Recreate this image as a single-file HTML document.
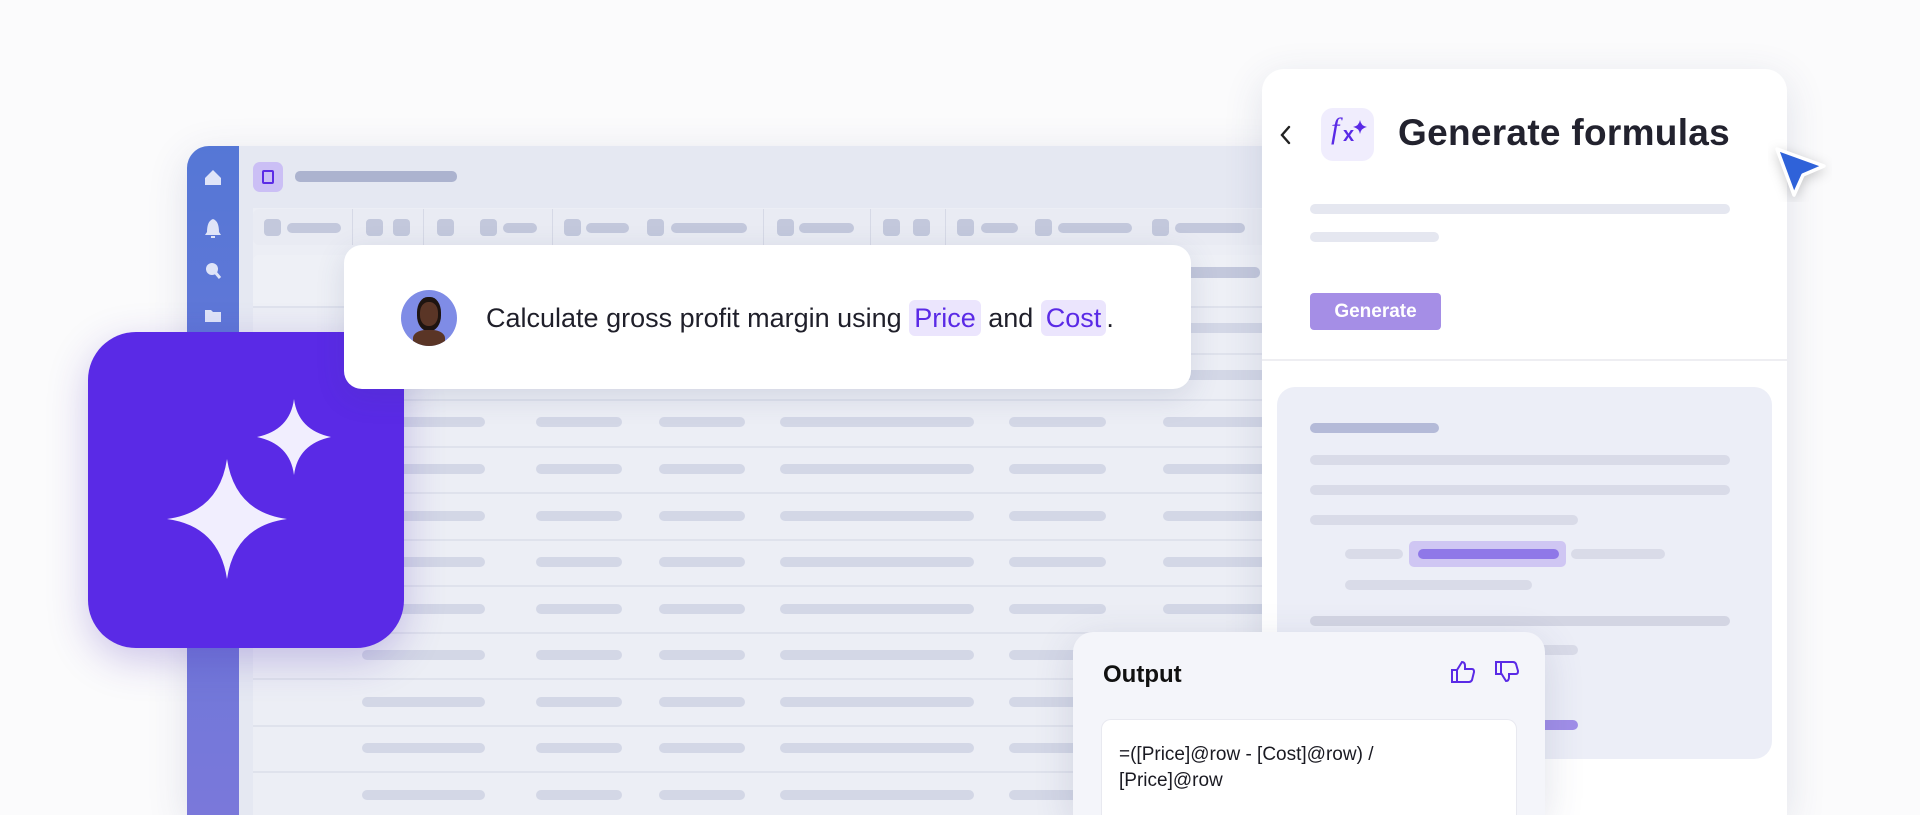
<!DOCTYPE html>
<html><head><meta charset="utf-8"><style>
*{margin:0;padding:0;box-sizing:border-box}
html,body{width:1920px;height:815px;overflow:hidden}
body{background:#fbfbfc;font-family:"Liberation Sans",sans-serif}
#wrap{position:relative;width:1920px;height:815px;overflow:hidden}
.a{position:absolute}
.bar{position:absolute;height:10px;border-radius:5px;background:#d3d7e6}
.ln{position:absolute;left:253px;width:1020px;height:2px;background:#dfe2ec}
</style></head><body><div id="wrap">

<div class="a" style="left:187px;top:146px;width:1100px;height:669px;border-radius:22px 0 0 0;background:#e5e8f2;box-shadow:0 10px 40px rgba(60,70,120,.15);overflow:hidden">
  <div class="a" style="left:0;top:0;width:52px;height:669px;background:linear-gradient(#5577d6,#7a78da)"></div>
  <div class="a" style="left:66px;top:62px;width:1030px;height:607px;background:#eceef5"></div>
</div>
<svg class="a" style="left:203px;top:166px" width="20" height="160" fill="#dfe4f8">
  <path d="M2 12 L10 4 L18 12 V19 H2Z"/>
  <path d="M4 66 Q4 55 10 53 Q16 55 16 66 L18 69 H2Z M8 70 h4 v2 h-4z"/>
  <circle cx="9" cy="103" r="6"/><path d="M12 106 l5 6" stroke="#dfe4f8" stroke-width="3"/>
  <path d="M2 144 h6 l2 2 h8 v10 h-16z"/>
</svg>
<div class="a" style="left:253px;top:162px;width:30px;height:30px;border-radius:7px;background:#cbbff5"></div>
<div class="a" style="left:262px;top:170px;width:12px;height:14px;border:2px solid #5b2be6;border-radius:2px"></div>
<div class="bar" style="left:295px;top:171px;width:162px;height:11px;background:#acb3cf"></div>
<div class="a" style="left:253px;top:209px;width:1030px;height:36px;border-radius:6px;background:#e9ebf3"></div>
<div class="a" style="left:352px;top:209px;width:1px;height:36px;background:#d6d9e6"></div>
<div class="a" style="left:423px;top:209px;width:1px;height:36px;background:#d6d9e6"></div>
<div class="a" style="left:552px;top:209px;width:1px;height:36px;background:#d6d9e6"></div>
<div class="a" style="left:763px;top:209px;width:1px;height:36px;background:#d6d9e6"></div>
<div class="a" style="left:870px;top:209px;width:1px;height:36px;background:#d6d9e6"></div>
<div class="a" style="left:945px;top:209px;width:1px;height:36px;background:#d6d9e6"></div>
<div class="bar" style="left:264px;top:219px;width:17px;height:17px;border-radius:4px;background:#c3c8dc"></div><div class="bar" style="left:287px;top:223px;width:54px;background:#c3c8dc"></div>
<div class="bar" style="left:366px;top:219px;width:17px;height:17px;border-radius:4px;background:#c3c8dc"></div><div class="bar" style="left:393px;top:219px;width:17px;height:17px;border-radius:4px;background:#c3c8dc"></div>
<div class="bar" style="left:437px;top:219px;width:17px;height:17px;border-radius:4px;background:#c3c8dc"></div>
<div class="bar" style="left:480px;top:219px;width:17px;height:17px;border-radius:4px;background:#c3c8dc"></div><div class="bar" style="left:503px;top:223px;width:34px;background:#c3c8dc"></div>
<div class="bar" style="left:564px;top:219px;width:17px;height:17px;border-radius:4px;background:#c3c8dc"></div><div class="bar" style="left:586px;top:223px;width:43px;background:#c3c8dc"></div>
<div class="bar" style="left:647px;top:219px;width:17px;height:17px;border-radius:4px;background:#c3c8dc"></div><div class="bar" style="left:671px;top:223px;width:76px;background:#c3c8dc"></div>
<div class="bar" style="left:777px;top:219px;width:17px;height:17px;border-radius:4px;background:#c3c8dc"></div><div class="bar" style="left:799px;top:223px;width:55px;background:#c3c8dc"></div>
<div class="bar" style="left:883px;top:219px;width:17px;height:17px;border-radius:4px;background:#c3c8dc"></div><div class="bar" style="left:913px;top:219px;width:17px;height:17px;border-radius:4px;background:#c3c8dc"></div>
<div class="bar" style="left:957px;top:219px;width:17px;height:17px;border-radius:4px;background:#c3c8dc"></div><div class="bar" style="left:981px;top:223px;width:37px;background:#c3c8dc"></div>
<div class="bar" style="left:1035px;top:219px;width:17px;height:17px;border-radius:4px;background:#c3c8dc"></div><div class="bar" style="left:1058px;top:223px;width:74px;background:#c3c8dc"></div>
<div class="bar" style="left:1152px;top:219px;width:17px;height:17px;border-radius:4px;background:#c3c8dc"></div><div class="bar" style="left:1175px;top:223px;width:70px;background:#c3c8dc"></div>
<div class="a" style="left:253px;top:255px;width:1030px;height:51px;background:#eef0f6;border-radius:6px 0 0 0"></div>
<div class="bar" style="left:1185px;top:267px;width:75px;height:11px;background:#c3c8dc"></div>
<div class="ln" style="top:306px"></div><div class="ln" style="top:353px"></div><div class="ln" style="top:399px"></div>
<div class="ln" style="top:446px"></div><div class="ln" style="top:492px"></div><div class="ln" style="top:539px"></div>
<div class="ln" style="top:585px"></div><div class="ln" style="top:632px"></div><div class="ln" style="top:678px"></div>
<div class="ln" style="top:725px"></div><div class="ln" style="top:771px"></div>
<div id="rows"></div>
<script>
var ys=[328,375,422,469,516,562,609,655,702,748,795],xs=[[362,123],[536,86],[659,86],[780,194],[1009,97],[1163,110]],h='';
ys.forEach(function(y){xs.forEach(function(c){h+='<div class="bar" style="left:'+c[0]+'px;top:'+(y-5)+'px;width:'+c[1]+'px"></div>'})});
document.getElementById('rows').innerHTML=h;
</script>

<div class="a" style="left:88px;top:332px;width:316px;height:316px;border-radius:48px;background:#5a2ae6;box-shadow:0 12px 40px rgba(70,40,180,.25)"></div>
<svg class="a" style="left:88px;top:332px" width="316" height="316" fill="#f1eefe">
  <path d="M139 127 Q147 180 199 187 Q147 194 139 247 Q131 194 79 187 Q131 180 139 127Z"/>
  <path d="M206 67 Q210 98 243 105 Q210 112 206 143 Q202 112 169 105 Q202 98 206 67Z"/>
</svg>

<div class="a" style="left:344px;top:245px;width:847px;height:144px;border-radius:18px;background:#fff;box-shadow:0 8px 30px rgba(60,70,120,.14)"></div>
<div class="a" style="left:401px;top:290px;width:56px;height:56px;border-radius:50%;background:#7f8ce6;overflow:hidden">
  <div class="a" style="left:16px;top:7px;width:24px;height:34px;border-radius:45%;background:#1e1410"></div>
  <div class="a" style="left:19px;top:12px;width:18px;height:24px;border-radius:45%;background:#5a3526"></div>
  <div class="a" style="left:12px;top:40px;width:32px;height:20px;border-radius:40% 40% 0 0;background:#5a3526"></div>
</div>
<div class="a" style="left:486px;top:300px;font-size:27px;color:#1f1f2a;line-height:36px;white-space:nowrap">Calculate gross profit margin using <span style="background:#ebe5fd;color:#5a2ae6;border-radius:6px;padding:3px 5px">Price</span> and <span style="background:#ebe5fd;color:#5a2ae6;border-radius:6px;padding:3px 5px">Cost</span>.</div>

<div class="a" style="left:1262px;top:69px;width:525px;height:746px;border-radius:22px 22px 0 0;background:#fff;box-shadow:0 10px 40px rgba(60,70,120,.14)"></div>
<svg class="a" style="left:1278px;top:123px" width="16" height="24"><path d="M11 4 L4 12 L11 20" stroke="#222" stroke-width="2.4" fill="none" stroke-linecap="round"/></svg>
<div class="a" style="left:1321px;top:108px;width:53px;height:53px;border-radius:12px;background:#f0edfd"></div>
<div class="a" style="left:1331px;top:112px;font-family:'Liberation Serif',serif;font-style:italic;font-size:30px;color:#5a2ae6">f</div>
<div class="a" style="left:1343px;top:124px;font-size:20px;font-weight:bold;color:#5a2ae6">x</div>
<svg class="a" style="left:1353px;top:120px" width="14" height="14" fill="#5a2ae6"><path d="M7 0 Q8 6 14 7 Q8 8 7 14 Q6 8 0 7 Q6 6 7 0Z"/></svg>
<div class="a" style="left:1398px;top:112px;font-size:37px;font-weight:bold;color:#22222e;letter-spacing:.3px">Generate formulas</div>
<div class="bar" style="left:1310px;top:204px;width:420px;background:#e5e7f0"></div>
<div class="bar" style="left:1310px;top:232px;width:129px;background:#e5e7f0"></div>
<div class="a" style="left:1310px;top:293px;width:131px;height:37px;border-radius:4px;background:#a58ee6;color:#fff;font-weight:bold;font-size:19px;text-align:center;line-height:37px">Generate</div>
<div class="a" style="left:1262px;top:359px;width:525px;height:2px;background:#eeeef2"></div>
<div class="a" style="left:1277px;top:387px;width:495px;height:372px;border-radius:18px;background:#eceef7"></div>
<div class="bar" style="left:1310px;top:423px;width:129px;background:#b4bad8"></div>
<div class="bar" style="left:1310px;top:455px;width:420px;background:#d9dbe8"></div>
<div class="bar" style="left:1310px;top:485px;width:420px;background:#d9dbe8"></div>
<div class="bar" style="left:1310px;top:515px;width:268px;background:#d9dbe8"></div>
<div class="bar" style="left:1345px;top:549px;width:58px;background:#d9dbe8"></div>
<div class="a" style="left:1409px;top:541px;width:157px;height:26px;border-radius:5px;background:#cfc6f3"></div>
<div class="bar" style="left:1418px;top:549px;width:141px;background:#8f78e8"></div>
<div class="bar" style="left:1571px;top:549px;width:94px;background:#d9dbe8"></div>
<div class="bar" style="left:1345px;top:580px;width:187px;background:#d9dbe8"></div>
<div class="bar" style="left:1310px;top:616px;width:420px;background:#d3d5e3"></div>
<div class="bar" style="left:1310px;top:645px;width:268px;background:#d9dbe8"></div>
<div class="bar" style="left:1506px;top:720px;width:72px;background:#a08ee8"></div>

<div class="a" style="left:1073px;top:632px;width:472px;height:183px;border-radius:20px 20px 0 0;background:#f4f5fa;box-shadow:0 10px 40px rgba(60,70,120,.16)"></div>
<div class="a" style="left:1103px;top:661px;font-size:24px;font-weight:bold;color:#111">Output</div>
<svg class="a" style="left:1450px;top:660px" width="26" height="24" fill="none" stroke="#5a2ae6" stroke-width="2"><path d="M2 10 h5 v12 h-5z M7 10 l5 -8 q3 0 3 4 v3 h7 q2 0 2 3 l-2 8 q-1 2 -3 2 h-12"/></svg>
<svg class="a" style="left:1494px;top:660px" width="26" height="24" fill="none" stroke="#5a2ae6" stroke-width="2"><path d="M2 2 h5 v12 h-5z M7 2 h12 q2 0 3 2 l2 7 q0 3 -2 3 h-7 v3 q0 4 -3 4 l-5 -8"/></svg>
<div class="a" style="left:1101px;top:719px;width:416px;height:96px;border-radius:10px 10px 0 0;background:#fff;border:1px solid #e8e9f0;border-bottom:none"></div>
<div class="a" style="left:1119px;top:742px;font-size:19px;color:#1a1a22;line-height:26px">=([Price]@row - [Cost]@row) /<br>[Price]@row</div>

<svg class="a" style="left:1768px;top:138px" width="64" height="64"><path d="M9 11 L56 28 L35 37 L26 57 Z" fill="#2f62d9" stroke="#fff" stroke-width="3.5" stroke-linejoin="round" style="filter:drop-shadow(0 3px 6px rgba(0,0,0,.2))"/></svg>
</div></body></html>
